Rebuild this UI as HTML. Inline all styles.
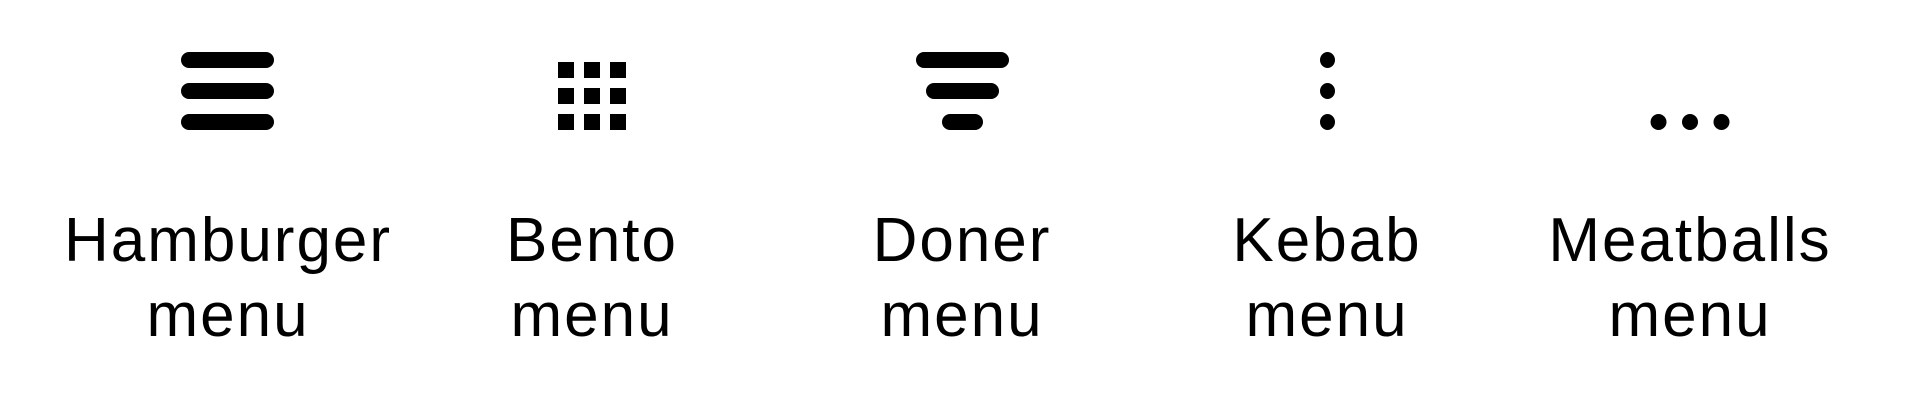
<!DOCTYPE html>
<html><head><meta charset="utf-8"><style>
html,body{margin:0;padding:0;background:#fff;width:1920px;height:409px;overflow:hidden}
.c{position:absolute;top:0;width:366px;height:409px}
.t{position:absolute;top:203px;left:0;width:100%;text-align:center;font-family:"Liberation Sans",sans-serif;font-size:62px;line-height:75px;color:#000;letter-spacing:2px}
svg{position:absolute;left:0;top:0}
</style></head><body>
<svg width="1920" height="409">
<g fill="#000">
<rect x="181" y="52" width="93" height="16" rx="8"/>
<rect x="181" y="83" width="93" height="16" rx="8"/>
<rect x="181" y="114" width="93" height="16" rx="8"/>

<rect x="558" y="62" width="16" height="16"/><rect x="584" y="62" width="16" height="16"/><rect x="610" y="62" width="16" height="16"/>
<rect x="558" y="88" width="16" height="16"/><rect x="584" y="88" width="16" height="16"/><rect x="610" y="88" width="16" height="16"/>
<rect x="558" y="114" width="16" height="16"/><rect x="584" y="114" width="16" height="16"/><rect x="610" y="114" width="16" height="16"/>

<rect x="916" y="52" width="93" height="16" rx="8"/>
<rect x="926" y="83" width="73" height="16" rx="8"/>
<rect x="942" y="114" width="41" height="16" rx="8"/>

<ellipse cx="1327.5" cy="60" rx="7.5" ry="8"/>
<ellipse cx="1327.5" cy="91" rx="7.5" ry="8"/>
<ellipse cx="1327.5" cy="122" rx="7.5" ry="8"/>

<ellipse cx="1658.5" cy="122" rx="8" ry="8"/>
<ellipse cx="1690" cy="122" rx="8" ry="8"/>
<ellipse cx="1721.5" cy="122" rx="8" ry="8"/>
</g></svg>
<div class="c" style="left:45px"><div class="t">Hamburger<br>menu</div></div>
<div class="c" style="left:409px"><div class="t">Bento<br>menu</div></div>
<div class="c" style="left:779px"><div class="t">Doner<br>menu</div></div>
<div class="c" style="left:1144px"><div class="t">Kebab<br>menu</div></div>
<div class="c" style="left:1507px"><div class="t">Meatballs<br>menu</div></div>
</body></html>
